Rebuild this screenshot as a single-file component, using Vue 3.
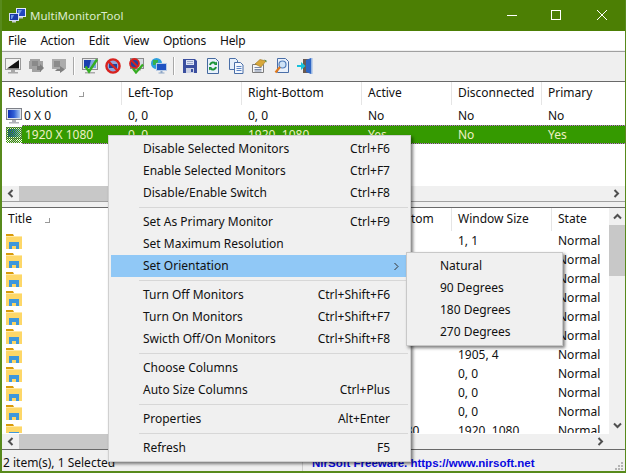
<script setup>
const topCols = ['Resolution', 'Left-Top', 'Right-Bottom', 'Active', 'Disconnected', 'Primary']
const topRows = [
  { id: 1, cells: ['0 X 0', '0, 0', '0, 0', 'No', 'No', 'No'], selected: false },
  { id: 2, cells: ['1920 X 1080', '0, 0', '1920, 1080', 'Yes', 'No', 'Yes'], selected: true },
]
const sizes = ['1, 1', '', '', '', '', '', '1905, 4', '0, 0', '0, 0', '0, 0', '1920, 1080']
const menu = [
  [['Disable Selected Monitors', 'Ctrl+F6'], ['Enable Selected Monitors', 'Ctrl+F7'], ['Disable/Enable Switch', 'Ctrl+F8']],
  [['Set As Primary Monitor', 'Ctrl+F9'], ['Set Maximum Resolution', ''], ['Set Orientation', '', true]],
  [['Turn Off Monitors', 'Ctrl+Shift+F6'], ['Turn On Monitors', 'Ctrl+Shift+F7'], ['Swicth Off/On Monitors', 'Ctrl+Shift+F8']],
  [['Choose Columns', ''], ['Auto Size Columns', 'Ctrl+Plus']],
  [['Properties', 'Alt+Enter']],
  [['Refresh', 'F5']],
]
</script>

<template>
  <div class="win">
    <div class="title">
      <svg class="logo" width="17" height="17" viewBox="0 0 17 17">
        <rect x="7.500" y="1.500" width="9" height="8" fill="#2247c0" stroke="#e6ecfa" />
        <path d="M9 3h4l-3 5H9z" fill="#6f97e6" />
        <rect x=".5" y="6.500" width="9" height="7" fill="#1c3aa8" stroke="#d5def2" />
        <path d="M2 8h3l-2 4H2z" fill="#6f97e6" />
        <path d="M3 14h4v1.500H3zM10 10h4v1.500h-4z" fill="#c6cbd4" />
      </svg>
      <span class="title-text">MultiMonitorTool</span>
      <div class="caps">
        <svg width="12" height="12" viewBox="0 0 12 12"><path d="M1 6.500h10" stroke="#fff" fill="none" /></svg>
        <svg width="12" height="12" viewBox="0 0 12 12"><rect x=".5" y="1.500" width="9" height="9" stroke="#fff" fill="none" /></svg>
        <svg width="12" height="12" viewBox="0 0 12 12"><path d="M1 1l10 10M11 1L1 11" stroke="#fff" fill="none" /></svg>
      </div>
    </div>
    <div class="menubar">
      <span>File</span><span>Action</span><span>Edit</span><span>View</span><span>Options</span><span>Help</span>
    </div>
    <div class="toolbar">
      <svg width="16" height="16" viewBox="0 0 16 16"><rect x=".5" y=".5" width="15" height="11" fill="#f2f2f2" stroke="#9a9a9a" /><path d="M2 10.500L14 2v8.500z" fill="#111" /><path d="M6 12h4v2H6zM3 14h10v1.500H3z" fill="#a8a8a8" /></svg>
      <svg width="16" height="16" viewBox="0 0 16 16"><path d="M2 1h10v2h3v8h-2v3H4v-3H1V3h1z" fill="#a2a2a2" /><path d="M4 3h6v5H4z" fill="#8a8a8a" /><path d="M9 8h3V6l4 4-4 4v-2H9z" fill="#7e7e7e" /></svg>
      <svg width="16" height="16" viewBox="0 0 16 16"><rect x="1" y="1" width="14" height="10" fill="#ababab" /><path d="M3 3h6v6H3z" fill="#8c8c8c" /><path d="M6 11h3V8l5 3.500L9 15v-2H4z" fill="#808080" /></svg>
      <i class="sep"></i>
      <svg width="16" height="16" viewBox="0 0 16 16"><rect x=".5" y=".5" width="15" height="11" fill="#e6e8ec" stroke="#8d8d8d" /><rect x="2" y="2" width="12" height="8" fill="#1a3fb0" /><path d="M9 2h5v8H7z" fill="#7ea6e4" /><path d="M3 14h10v1.500H3z" fill="#aaa" /><path d="M3.500 8.500l3.500 5 8-12" stroke="#35ad22" stroke-width="2.400" fill="none" /></svg>
      <svg width="16" height="16" viewBox="0 0 16 16"><circle cx="8" cy="8" r="6.600" fill="#8fa6dc" stroke="#d8221f" stroke-width="2.400" /><path d="M4 6h8v4H4z" fill="#23409f" /><path d="M3.500 3.500l9 9" stroke="#d8221f" stroke-width="2.400" /></svg>
      <svg width="16" height="16" viewBox="0 0 16 16"><rect x="2.500" y=".5" width="13" height="10" fill="#d8dce4" stroke="#8d8d8d" /><circle cx="6.500" cy="5.500" r="4.500" fill="#24409f" stroke="#d8221f" stroke-width="1.800" /><path d="M3.500 2.500l6 6" stroke="#d8221f" stroke-width="1.800" /><path d="M5 11h8v1.500H5z" fill="#aaa" /><path d="M5 10.500l3 4 7-8" stroke="#35ad22" stroke-width="2.200" fill="none" /></svg>
      <svg width="16" height="16" viewBox="0 0 16 16"><circle cx="5.500" cy="5.500" r="5.500" fill="#2d9fdc" /><path d="M2 2h5v2L4 7H2zM6 8h3v2H6z" fill="#37b24a" /><rect x="5.500" y="5.500" width="10" height="7" fill="#1f52c2" stroke="#b7cbe6" /><path d="M9.500 13h2v1.500h-2zM7.500 14.500h6v1h-6z" fill="#8ea6c6" /></svg>
      <i class="sep"></i>
      <svg width="16" height="16" viewBox="0 0 16 16"><path d="M1 1h12l2 2v12H1z" fill="#3b4f9f" /><rect x="4" y="2" width="8" height="5" fill="#dfe5f5" /><path d="M5 3.500h6M5 5.500h6" stroke="#9aa6c8" /><rect x="4" y="10" width="8" height="5" fill="#cdd3e4" /><rect x="9" y="11" width="2" height="3" fill="#3b4f9f" /></svg>
      <svg width="16" height="16" viewBox="0 0 16 16"><path d="M2.500 .5h8l3 3v12h-11z" fill="#e8f1fb" stroke="#45699f" /><path d="M5 7a3.200 3.200 0 0 1 5.500-1.500M11 9a3.200 3.200 0 0 1-5.500 1.500" stroke="#1a9438" stroke-width="2" fill="none" /><path d="M9 7h3V3.500zM7 9H4v3.500z" fill="#1a9438" /></svg>
      <svg width="16" height="16" viewBox="0 0 16 16"><path d="M1.500 .5h6l2 2v9h-8z" fill="#e6effa" stroke="#4a6fa8" /><path d="M6.500 4.500h6l2.500 2.500v8.500H6.500z" fill="#f3f7fd" stroke="#4a6fa8" /><path d="M8.500 8.500h5M8.500 10.500h5M8.500 12.500h5" stroke="#5b84c4" /></svg>
      <svg width="16" height="16" viewBox="0 0 16 16"><path d="M1.500 6.500h11v8h-11z" fill="#f6f6f6" stroke="#7c7c7c" /><path d="M3.500 9.500h7M3.500 11.500h7M3.500 13h7" stroke="#7a8aa8" /><path d="M4 6l5-4.500 6 1.500-5 6z" fill="#d8a83a" stroke="#9a7420" stroke-width=".6" /><path d="M13 1.500l2.500 1v2z" fill="#4d8a3e" /></svg>
      <svg width="16" height="16" viewBox="0 0 16 16"><path d="M3.500 .5h8l3 3v11h-11z" fill="#eaf1fb" stroke="#4a6fa8" /><circle cx="8.500" cy="6.500" r="3.500" fill="#cfe3f7" stroke="#4f7cba" stroke-width="1.200" /><path d="M6 9L1.500 14.500" stroke="#e07a1e" stroke-width="2.200" /></svg>
      <svg width="16" height="16" viewBox="0 0 16 16"><path d="M6 1h8v14H6z" fill="#6b5a50" /><path d="M9 2l5-2v16l-5-2z" fill="#2f66c4" /><path d="M14 0h1.500v16H14z" fill="#9ab8e4" /><path d="M0 7h4V4l4.500 4L4 12V9H0z" fill="#16c2dc" /></svg>
    </div>

    <div class="pane top-pane">
      <div class="grid head top-grid">
        <span v-for="c in topCols" :key="c" class="th">{{ c }}</span>
      </div>
      <i class="sort s1"></i>
      <div v-for="r in topRows" :key="r.id" class="grid row top-grid" :class="{ sel: r.selected }">
        <i v-if="r.selected" class="sel-bar"></i>
        <span v-for="(c, i) in r.cells" :key="i" class="td" :class="{ first: i === 0 }">
          <svg v-if="i === 0" class="mon" width="16" height="16" viewBox="0 0 16 16">
            <defs>
              <linearGradient :id="'scr' + r.id" x1="0" x2="1" y1="0" y2="0">
                <stop offset="0" stop-color="#0f2fb4" /><stop offset=".5" stop-color="#2f5fd6" /><stop offset="1" stop-color="#a9c8f0" />
              </linearGradient>
              <pattern :id="'chk' + r.id" width="2" height="2" patternUnits="userSpaceOnUse">
                <rect width="1" height="1" fill="#3a9a00" /><rect x="1" y="1" width="1" height="1" fill="#3a9a00" />
              </pattern>
            </defs>
            <rect x=".5" y=".5" width="15" height="11" fill="#dfe3ea" stroke="#7d8088" />
            <rect x="2" y="2" width="12" height="8" :fill="'url(#scr' + r.id + ')'" />
            <path d="M6 12h4v2H6zM3 14h10v1.500H3z" fill="#b0b3b9" />
            <rect v-if="r.selected" width="16" height="16" :fill="'url(#chk' + r.id + ')'" />
          </svg>
          <em v-if="i === 0" class="name">{{ c }}</em>
          <template v-else>{{ c }}</template>
        </span>
      </div>
      <div class="hs top-hs">
        <b class="arrow"><svg width="7" height="9" viewBox="0 0 7 9"><path d="M5.500 1L2 4.500 5.500 8" stroke="#505050" stroke-width="2" fill="none" /></svg></b>
        <b class="thumb"></b><b class="track"></b>
        <b class="arrow"><svg width="7" height="9" viewBox="0 0 7 9"><path d="M1.500 1L5 4.500 1.500 8" stroke="#505050" stroke-width="2" fill="none" /></svg></b>
      </div>
    </div>

    <div class="pane bottom-pane">
      <div class="bottom-body">
        <div class="bottom-main">
          <div class="grid head bottom-grid">
            <span class="th">Title</span><span class="th">Right-Bottom</span><span class="th">Window Size</span><span class="th">State</span>
          </div>
          <i class="sort s2"></i>
          <div class="bottom-rows">
            <div v-for="(s, i) in sizes" :key="i" class="grid row bottom-grid">
              <span class="td folder">
                <svg width="16" height="15" viewBox="0 0 16 15">
                  <path d="M0 0h7l1 2H0z" fill="#d99b0a" />
                  <path d="M0 2h16v13H0z" fill="#fdd768" />
                  <path d="M0 2h16v1H0z" fill="#ffe9a6" />
                  <path d="M3 15V8h10v7h-3v-3H6v3z" fill="#3d97dc" />
                </svg>
              </span>
              <span class="td">{{ i === 10 ? '1920, 1080' : '' }}</span>
              <span class="td">{{ s }}</span>
              <span class="td">Normal</span>
            </div>
          </div>
        </div>
        <div class="vs">
          <b class="v-arrow"><svg width="9" height="7" viewBox="0 0 9 7"><path d="M1 5.500L4.500 2 8 5.500" stroke="#505050" stroke-width="2" fill="none" /></svg></b>
          <b class="v-thumb"></b><b class="v-space"></b>
          <b class="v-arrow"><svg width="9" height="7" viewBox="0 0 9 7"><path d="M1 1.500L4.500 5 8 1.500" stroke="#505050" stroke-width="2" fill="none" /></svg></b>
        </div>
      </div>
      <div class="hs bottom-hs">
        <b class="arrow"><svg width="7" height="9" viewBox="0 0 7 9"><path d="M5.500 1L2 4.500 5.500 8" stroke="#505050" stroke-width="2" fill="none" /></svg></b>
        <b class="thumb"></b><b class="track"></b>
        <b class="arrow"><svg width="7" height="9" viewBox="0 0 7 9"><path d="M1.500 1L5 4.500 1.500 8" stroke="#505050" stroke-width="2" fill="none" /></svg></b>
        <b class="corner"></b>
      </div>
    </div>

    <div class="status">
      <span class="st1">2 item(s), 1 Selected</span>
      <span class="st2">NirSoft Freeware. https://www.nirsoft.net</span>
      <svg class="grip" width="10" height="10" viewBox="0 0 10 10"><path d="M7 1h2v2H7zM4 4h2v2H4zM7 4h2v2H7zM1 7h2v2H1zM4 7h2v2H4zM7 7h2v2H7z" fill="#b4b4b4" /></svg>
    </div>

    <div class="ctx">
      <template v-for="(g, gi) in menu" :key="gi">
        <div v-if="gi > 0" class="msep"></div>
        <div v-for="m in g" :key="m[0]" class="mi" :class="{ hot: m[2] }">
          <span>{{ m[0] }}</span><span>{{ m[1] }}</span>
          <svg v-if="m[2]" class="chev" width="5" height="9" viewBox="0 0 5 9"><path d="M.5 1l3.500 3.500L.5 8" stroke="#333" fill="none" /></svg>
        </div>
      </template>
    </div>
    <div class="sub">
      <div class="si">Natural</div>
      <div class="si">90 Degrees</div>
      <div class="si">180 Degrees</div>
      <div class="si">270 Degrees</div>
    </div>
  </div>
</template>

<style>
html, body { margin: 0; }
</style>

<style scoped>
.win {
  position: relative;
  width: 626px;
  height: 473px;
  box-sizing: border-box;
  border: solid #588a1c;
  border-width: 0 1px 2px 2px;
  background: #f0f0f0;
  display: flex;
  flex-direction: column;
  overflow: hidden;
  font: 12px/16px "Noto Sans", sans-serif;
  color: #111;
}
.title {
  height: 31px;
  margin: 0 -1px 0 -2px;
  background: #4c7f04;
  display: flex;
  align-items: center;
  padding-left: 9px;
  flex: none;
}
.title-text { color: #dcecd0; margin-left: 4px; font-size: 11.500px; }
.logo { flex: none; }
.caps { margin-left: auto; margin-top: -1px; display: flex; gap: 33px; padding-right: 18px; }
.menubar {
  height: 20px;
  flex: none;
  background: #fff;
  display: flex;
  gap: 14px;
  letter-spacing: -.2px;
  padding-left: 6px;
  align-items: center;
  border-bottom: 1px solid #a0a0a0;
  box-shadow: inset 0 -1px #f0f0f0;
}
.toolbar {
  height: 28px;
  flex: none;
  display: flex;
  align-items: center;
  padding-left: 3px;
  gap: 7px;
  background: #efefef;
}
.sep { width: 1px; height: 18px; background: #a8a8a8; box-shadow: 1px 0 #fff; margin: 0 0 0 -1px; }
.sep + svg { margin-left: 1px; }
.pane {
  position: relative;
  background: #fff;
  border-top: 1px solid #696969;
  overflow: hidden;
  flex: none;
}
.top-pane { height: 119px; margin-top: 1px; border-bottom: 1px solid #a0a0a0; }
.bottom-pane { height: 241px; margin-top: 5px; display: flex; flex-direction: column; }
.grid { display: grid; position: relative; white-space: nowrap; }
.top-grid { grid-template-columns: 120px 120px 120px 90px 90px 90px; }
.bottom-grid { grid-template-columns: 120px 330px 100px 100px; width: 650px; }
.head { height: 24px; align-items: start; }
.bottom-grid.head { height: 23px; }
.th { padding-left: 6px; height: 23px; line-height: 21px; border-right: 1px solid #e5e5e5; box-sizing: border-box; overflow: hidden; }
.bottom-grid .th:nth-child(2), .bottom-grid .td:nth-child(2) { padding-left: 236px; }
.row { height: 19px; }
.td { padding-left: 6px; line-height: 19px; overflow: hidden; }
.td.first { display: flex; align-items: center; padding-left: 4px; overflow: visible; }
.td.folder { padding-left: 4px; }
.folder svg { display: block; margin-top: 3px; }
.name { font-style: normal; margin-left: 2px; }
.sel .name { margin-left: 3px; }
.sel-bar { position: absolute; left: 20px; right: 0; top: 0; bottom: 0; background: #359a00; border: dotted #c060e0; border-width: 1px 0; box-sizing: border-box; }
.sel .td { position: relative; color: #eef0c4; }
.mon { flex: none; }
.sort { position: absolute; width: 4px; height: 4px; border-right: 1px solid #999; border-bottom: 1px solid #999; }
.s1 { left: 77px; top: 10px; }
.s2 { left: 43px; top: 10px; }
.hs { display: flex; height: 15px; flex: none; align-items: stretch; background: #f0f0f0; }
.top-hs { position: absolute; left: 0; right: 0; bottom: 0; }
.arrow { width: 17px; display: flex; align-items: center; justify-content: center; flex: none; }
.thumb { width: 360px; background: #c8c8c8; flex: none; }
.track { flex: 1; }
.corner { width: 16px; flex: none; }
.bottom-body { display: flex; flex: 1; min-height: 0; }
.bottom-main { flex: 1; min-width: 0; position: relative; overflow: hidden; }
.bottom-rows { height: 202px; overflow: hidden; }
.vs { width: 16px; flex: none; background: #f0f0f0; display: flex; flex-direction: column; }
.v-arrow { height: 17px; flex: none; display: flex; align-items: center; justify-content: center; }
.v-thumb { height: 51px; background: #c8c8c8; flex: none; }
.v-space { flex: 1; }
.status {
  position: relative;
  height: 23px;
  box-sizing: border-box;
  flex: none;
  display: flex;
  align-items: center;
  padding-top: 3px;
  border-top: 1px solid #696969;
  background: #f0f0f0;
  white-space: nowrap;
}
.st1 { width: 299px; padding-left: 1px; flex: none; }
.st2 { color: #0a0ae0; font-weight: 700; font-family: "Liberation Sans", sans-serif; font-size: 11.500px; padding-left: 9px; border-left: 1px solid #cfcfcf; }
.grip { position: absolute; right: 1px; bottom: 1px; }
.ctx {
  position: absolute;
  left: 106px;
  top: 135px;
  width: 303px;
  box-sizing: border-box;
  background: #f0f0f0;
  border: 1px solid #d0d0d0;
  box-shadow: 2px 2px 3px rgba(0, 0, 0, .5);
  padding: 2px;
}
.mi {
  position: relative;
  height: 22px;
  line-height: 22px;
  display: flex;
  justify-content: space-between;
  padding: 0 18px 0 32px;
}
.hot { background: #90c8f6; }
.chev { position: absolute; right: 9px; top: 7px; }
.msep { height: 1px; background: #d7d7d7; margin: 3px 0 3px 28px; }
.sub {
  position: absolute;
  left: 404px;
  top: 252px;
  width: 157px;
  box-sizing: border-box;
  background: #f0f0f0;
  border: 1px solid #c8c8c8;
  box-shadow: 2px 2px 3px rgba(0, 0, 0, .5);
  padding: 2px;
}
.si { height: 22px; line-height: 22px; padding-left: 31px; }
</style>
